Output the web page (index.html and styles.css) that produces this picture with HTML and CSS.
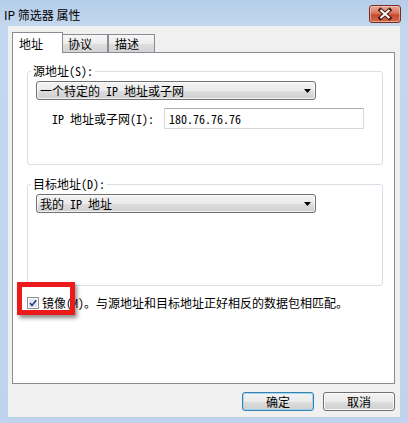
FILE: index.html
```html
<!DOCTYPE html>
<html lang="zh-CN">
  <head>
    <meta charset="UTF-8" />
    <meta name="viewport" content="width=device-width, initial-scale=1.0" />
    <title>IP 筛选器 属性</title>
    <link rel="stylesheet" href="styles.css">
  </head>
  <body>
    <div class="window">
      <div class="titlebar">
        <span class="title">IP 筛选器 属性</span>
        <button class="close-btn" aria-label="关闭">
          <svg width="32" height="18" viewBox="0 0 32 18">
            <path d="M11.5 5 L20.5 13 M20.5 5 L11.5 13" stroke="#4a1a12" stroke-width="4" stroke-linecap="square" fill="none" />
            <path d="M11.5 5 L20.5 13 M20.5 5 L11.5 13" stroke="#fff" stroke-width="2" fill="none" />
          </svg>
        </button>
      </div>

      <div class="client">
        <ul class="tabs">
          <li class="tab active">地址</li>
          <li class="tab">协议</li>
          <li class="tab">描述</li>
        </ul>

        <div class="tab-panel">
          <fieldset class="group group-src">
            <legend>源地址(S):</legend>
            <div class="combo">
              <span>一个特定的 IP 地址或子网</span>
              <svg class="arrow" width="7" height="4" viewBox="0 0 7 4"><polygon points="0,0 7,0 3.5,4" /></svg>
            </div>
            <div class="field-row">
              <label class="field-label">IP 地址或子网(I):</label>
              <div class="textbox">180.76.76.76</div>
            </div>
          </fieldset>

          <fieldset class="group group-dst">
            <legend>目标地址(D):</legend>
            <div class="combo">
              <span>我的 IP 地址</span>
              <svg class="arrow" width="7" height="4" viewBox="0 0 7 4"><polygon points="0,0 7,0 3.5,4" /></svg>
            </div>
          </fieldset>

          <div class="mirror-row">
            <span class="checkbox">
              <svg width="12" height="12" viewBox="0 0 12 12">
                <rect x="0.5" y="0.5" width="11" height="11" fill="#fff" stroke="#8e8f8f" />
                <rect x="2" y="2" width="8" height="8" fill="#dfe6ee" />
                <path d="M3 6 L5 8.5 L9.2 3.2" fill="none" stroke="#26428b" stroke-width="1.7" />
              </svg>
            </span>
            <span class="mirror-text">镜像(M)。与源地址和目标地址正好相反的数据包相匹配。</span>
            <span class="highlight"></span>
          </div>
        </div>

        <div class="buttons">
          <button class="btn btn-default">确定</button>
          <button class="btn">取消</button>
        </div>
      </div>
    </div>
  </body>
</html>
```

FILE: styles.css
```css
* {
  box-sizing: border-box;
}

body {
  margin: 0;
  width: 408px;
  height: 423px;
  overflow: hidden;
  font-family: "Noto Sans Mono CJK SC", "Noto Sans CJK SC", sans-serif;
  font-size: 12px;
  color: #000;
}

.window {
  height: 423px;
  display: flex;
  flex-direction: column;
  padding: 0 8px 6px 8px;
  background: linear-gradient(#b5cde9, #c3d7ee 26px, #bfd4ec);
}

.titlebar {
  height: 26px;
  display: flex;
  justify-content: space-between;
  align-items: flex-start;
  margin: 0 -1px 0 -4px;
}

.title {
  font-family: "Noto Sans CJK SC", sans-serif;
  font-size: 12px;
  line-height: 14px;
  padding-top: 8px;
  color: #000;
}

.close-btn {
  width: 32px;
  height: 18px;
  margin-top: 5px;
  padding: 0;
  border: 1px solid #7b2c22;
  border-radius: 3px;
  background: linear-gradient(#eaa99a, #d9785f 45%, #c8482e 55%, #d26a4c);
  box-shadow: inset 0 0 0 1px rgba(255, 220, 210, 0.5);
  display: flex;
  align-items: center;
  justify-content: center;
}

.close-btn svg {
  display: block;
  margin: -1px;
}

.client {
  flex: 1;
  display: flex;
  flex-direction: column;
  padding: 6px 5px 0 4px;
  background-color: #f0f0f0;
}

/* abas */
.tabs {
  list-style: none;
  margin: 0 0 -1px 0;
  padding: 0 0 0 2px;
  height: 21px;
  display: flex;
  position: relative;
  z-index: 1;
  font-family: "Noto Sans CJK SC", sans-serif;
}

.tab {
  width: 47px;
  height: 18px;
  margin-top: 2px;
  padding-left: 6px;
  line-height: 17px;
  border: 1px solid #898c95;
  border-bottom: none;
  background: linear-gradient(#f6f6f6, #ececec 50%, #dedede 51%, #d4d4d4);
}

.tab.active {
  position: relative;
  z-index: 1;
  width: 51px;
  height: 21px;
  margin: 0 -2px;
  padding-top: 2px;
  line-height: 18px;
  background: #fff;
}

.tab-panel {
  height: 332px;
  padding: 0 11px 0 14px;
  border: 1px solid #898c95;
  background: #fff;
}

/* grupos */
.group {
  min-width: 0;
  margin: 11px 0 0 0;
  padding: 3px 10px 35px 8px;
  border: 1px solid #d5dfe5;
  border-radius: 3px;
}

.group legend {
  padding: 0 2px;
  margin-left: -5px;
  line-height: 14px;
}

.group-dst {
  margin-top: 12px;
  padding-bottom: 72px;
}

.combo {
  width: 280px;
  height: 19px;
  display: flex;
  justify-content: space-between;
  align-items: center;
  padding: 0 4px 0 3px;
  border: 1px solid #707070;
  border-radius: 3px;
  background: linear-gradient(#f3f3f3, #ebebeb 50%, #dddddd 51%, #cfcfcf);
  box-shadow: inset 0 0 0 1px rgba(255, 255, 255, 0.7);
  line-height: 14px;
}

.combo .arrow {
  display: block;
  fill: #000;
}

.field-row {
  display: flex;
  align-items: center;
  margin-top: 8px;
  padding-left: 16px;
}

.field-label {
  width: 112px;
}

.textbox {
  width: 200px;
  height: 21px;
  padding: 0 4px;
  line-height: 19px;
  border: 1px solid #d6d9de;
  border-top-color: #abadb3;
}

/* espelho */
.mirror-row {
  position: relative;
  display: flex;
  align-items: center;
  height: 14px;
  margin-top: 10px;
}

.checkbox svg {
  display: block;
}

.mirror-text {
  margin-left: 3px;
  line-height: 14px;
  white-space: nowrap;
}

.highlight {
  position: absolute;
  left: -10px;
  top: -14px;
  width: 58px;
  height: 33px;
  border: 5px solid #ec1a1a;
  box-shadow: 2px 3px 4px rgba(0, 0, 0, 0.45);
}

/* botões */
.buttons {
  display: flex;
  justify-content: flex-end;
  gap: 9px;
  margin-top: 8px;
}

.btn {
  width: 72px;
  height: 19px;
  padding: 0;
  font-family: "Noto Sans CJK SC", sans-serif;
  font-size: 12px;
  line-height: 16px;
  color: #000;
  border: 1px solid #707070;
  border-radius: 3px;
  background: linear-gradient(#f3f3f3, #ebebeb 50%, #dddddd 51%, #cfcfcf);
  box-shadow: inset 0 0 0 1px #fcfcfc;
}

.btn-default {
  border-color: #3c7fb1;
  box-shadow: inset 0 0 0 1px #9ed8f0;
}
```
